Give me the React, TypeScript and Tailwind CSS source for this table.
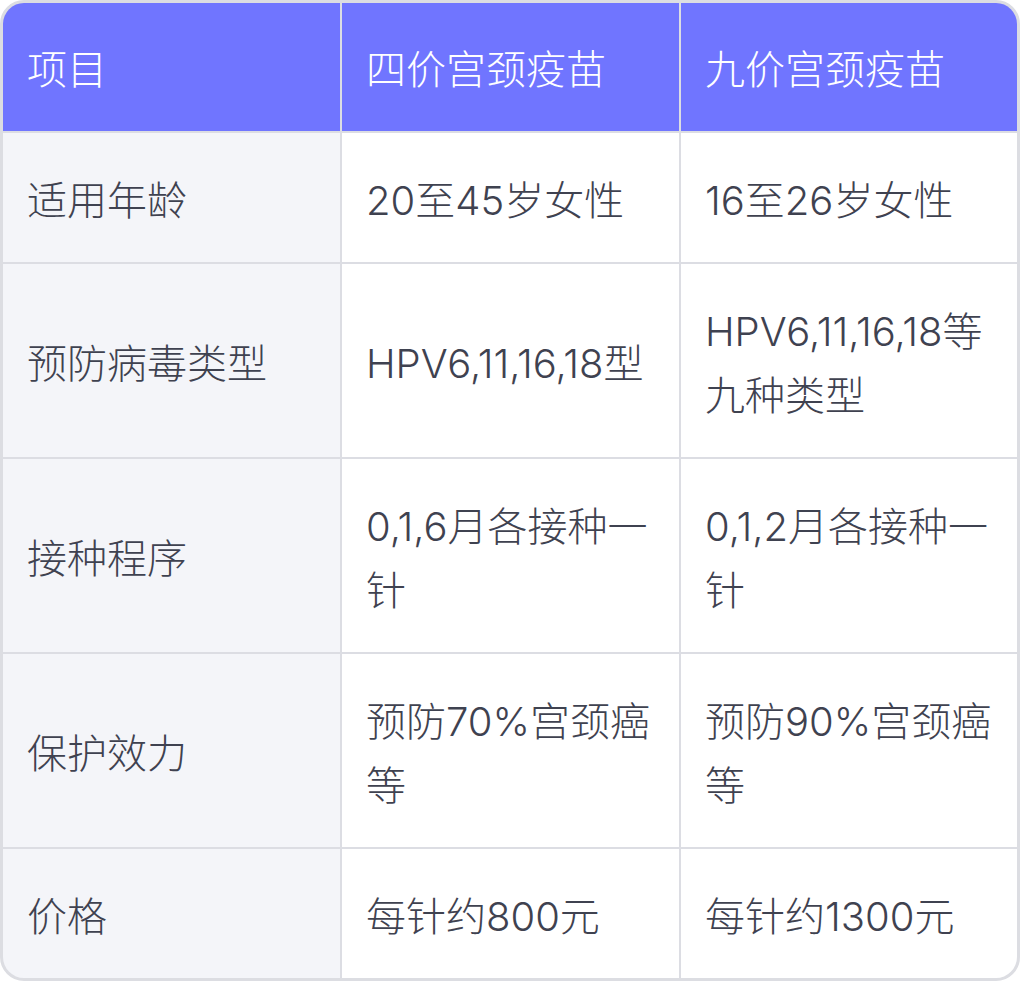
const headers = ["项目", "四价宫颈疫苗", "九价宫颈疫苗"];

const rows: { label: string; four: string; nine: string }[] = [
  { label: "适用年龄", four: "20至45岁女性", nine: "16至26岁女性" },
  { label: "预防病毒类型", four: "HPV6,11,16,18型", nine: "HPV6,11,16,18等九种类型" },
  { label: "接种程序", four: "0,1,6月各接种一针", nine: "0,1,2月各接种一针" },
  { label: "保护效力", four: "预防70%宫颈癌等", nine: "预防90%宫颈癌等" },
  { label: "价格", four: "每针约800元", nine: "每针约1300元" },
];

function Cell({ children, className = "" }: { children: React.ReactNode; className?: string }) {
  return (
    <div className={`flex items-center px-6 text-[40px] leading-[64px] font-light ${className}`}>
      <span>{children}</span>
    </div>
  );
}

export default function App() {
  return (
    <div
      className="w-[1020px] bg-white"
      style={{ fontFamily: '"Inter", "Noto Sans CJK SC Light", "Noto Sans CJK SC", sans-serif' }}
    >
      <div className="grid grid-cols-[337px_337px_1fr] gap-[2px] overflow-hidden rounded-[24px] border-[3px] border-[#dcdde2] bg-[#dcdde3]">
        {headers.map((h) => (
          <Cell key={h} className="bg-[#7075ff] pt-[35px] pb-[29px] text-white">
            {h}
          </Cell>
        ))}
        {rows.map((r) => (
          <div key={r.label} className="contents">
            <Cell className="bg-[#f4f5f9] pt-[35.5px] pb-[29.5px] text-[#3f4250]">{r.label}</Cell>
            <Cell className="bg-white pt-[35.5px] pb-[29.5px] text-[#3f4250]">{r.four}</Cell>
            <Cell className="bg-white pt-[35.5px] pb-[29.5px] text-[#3f4250]">{r.nine}</Cell>
          </div>
        ))}
      </div>
    </div>
  );
}
